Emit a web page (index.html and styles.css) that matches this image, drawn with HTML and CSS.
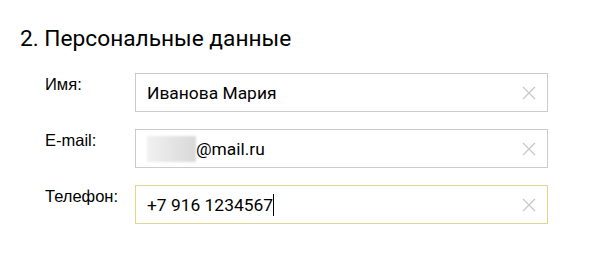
FILE: index.html
```html
<!DOCTYPE html>
<html lang="ru">
<head>
  <meta charset="UTF-8">
  <title>Персональные данные</title>
  <link rel="stylesheet" href="styles.css">
</head>
<body>

  <div class="section">
    <h2>2. Персональные данные</h2>

    <div class="row">
      <label class="label">Имя:</label>
      <div class="field">
        <span class="value">Иванова Мария</span>
        <svg class="clear" width="14" height="14" viewBox="0 0 14 14"><path d="M1 1 L13 13 M13 1 L1 13" stroke="#c8c8c8" stroke-width="1.3" fill="none"/></svg>
      </div>
    </div>

    <div class="row">
      <label class="label">E-mail:</label>
      <div class="field">
        <span class="blur"></span><span class="value">@mail.ru</span>
        <svg class="clear" width="14" height="14" viewBox="0 0 14 14"><path d="M1 1 L13 13 M13 1 L1 13" stroke="#c8c8c8" stroke-width="1.3" fill="none"/></svg>
      </div>
    </div>

    <div class="row">
      <label class="label">Телефон:</label>
      <div class="field focused">
        <span class="value">+7 916 1234567</span><span class="caret"></span>
        <svg class="clear" width="14" height="14" viewBox="0 0 14 14"><path d="M1 1 L13 13 M13 1 L1 13" stroke="#c8c8c8" stroke-width="1.3" fill="none"/></svg>
      </div>
    </div>
  </div>

</body>
</html>
```

FILE: styles.css
```css
body {
  margin: 0;
  background-color: white;
  font-family: "Liberation Sans", Arial, sans-serif;
  color: #000;
}

.section {
  padding: 26px 0 0 20px;
}

h2 {
  font-family: Roboto, "Liberation Sans", sans-serif;
  font-weight: 400;
  font-size: 22.7px;
  line-height: 26px;
  margin: 0 0 21px 0;
}

.row {
  display: flex;
  align-items: flex-start;
  margin-left: 25px;
  margin-bottom: 17px;
}

.label {
  width: 90px;
  font-size: 16.5px;
  line-height: 20px;
  padding-top: 1px;
}

.field {
  display: flex;
  align-items: center;
  box-sizing: border-box;
  width: 413px;
  height: 39px;
  padding: 0 11px 0 11px;
  border: 1px solid #cccccc;
  font-family: Roboto, "Liberation Sans", sans-serif;
  font-size: 17.4px;
}

.field.focused {
  border-color: #e3d38f;
}

.value {
  line-height: 20px;
}

.blur {
  width: 49px;
  height: 26px;
  background: linear-gradient(90deg, #f1f1f1, #e2e2e2 60%, #d9d9d9);
  filter: blur(1px);
}

.caret {
  width: 1px;
  height: 22px;
  background-color: #000;
}

.clear {
  margin-left: auto;
}
```
